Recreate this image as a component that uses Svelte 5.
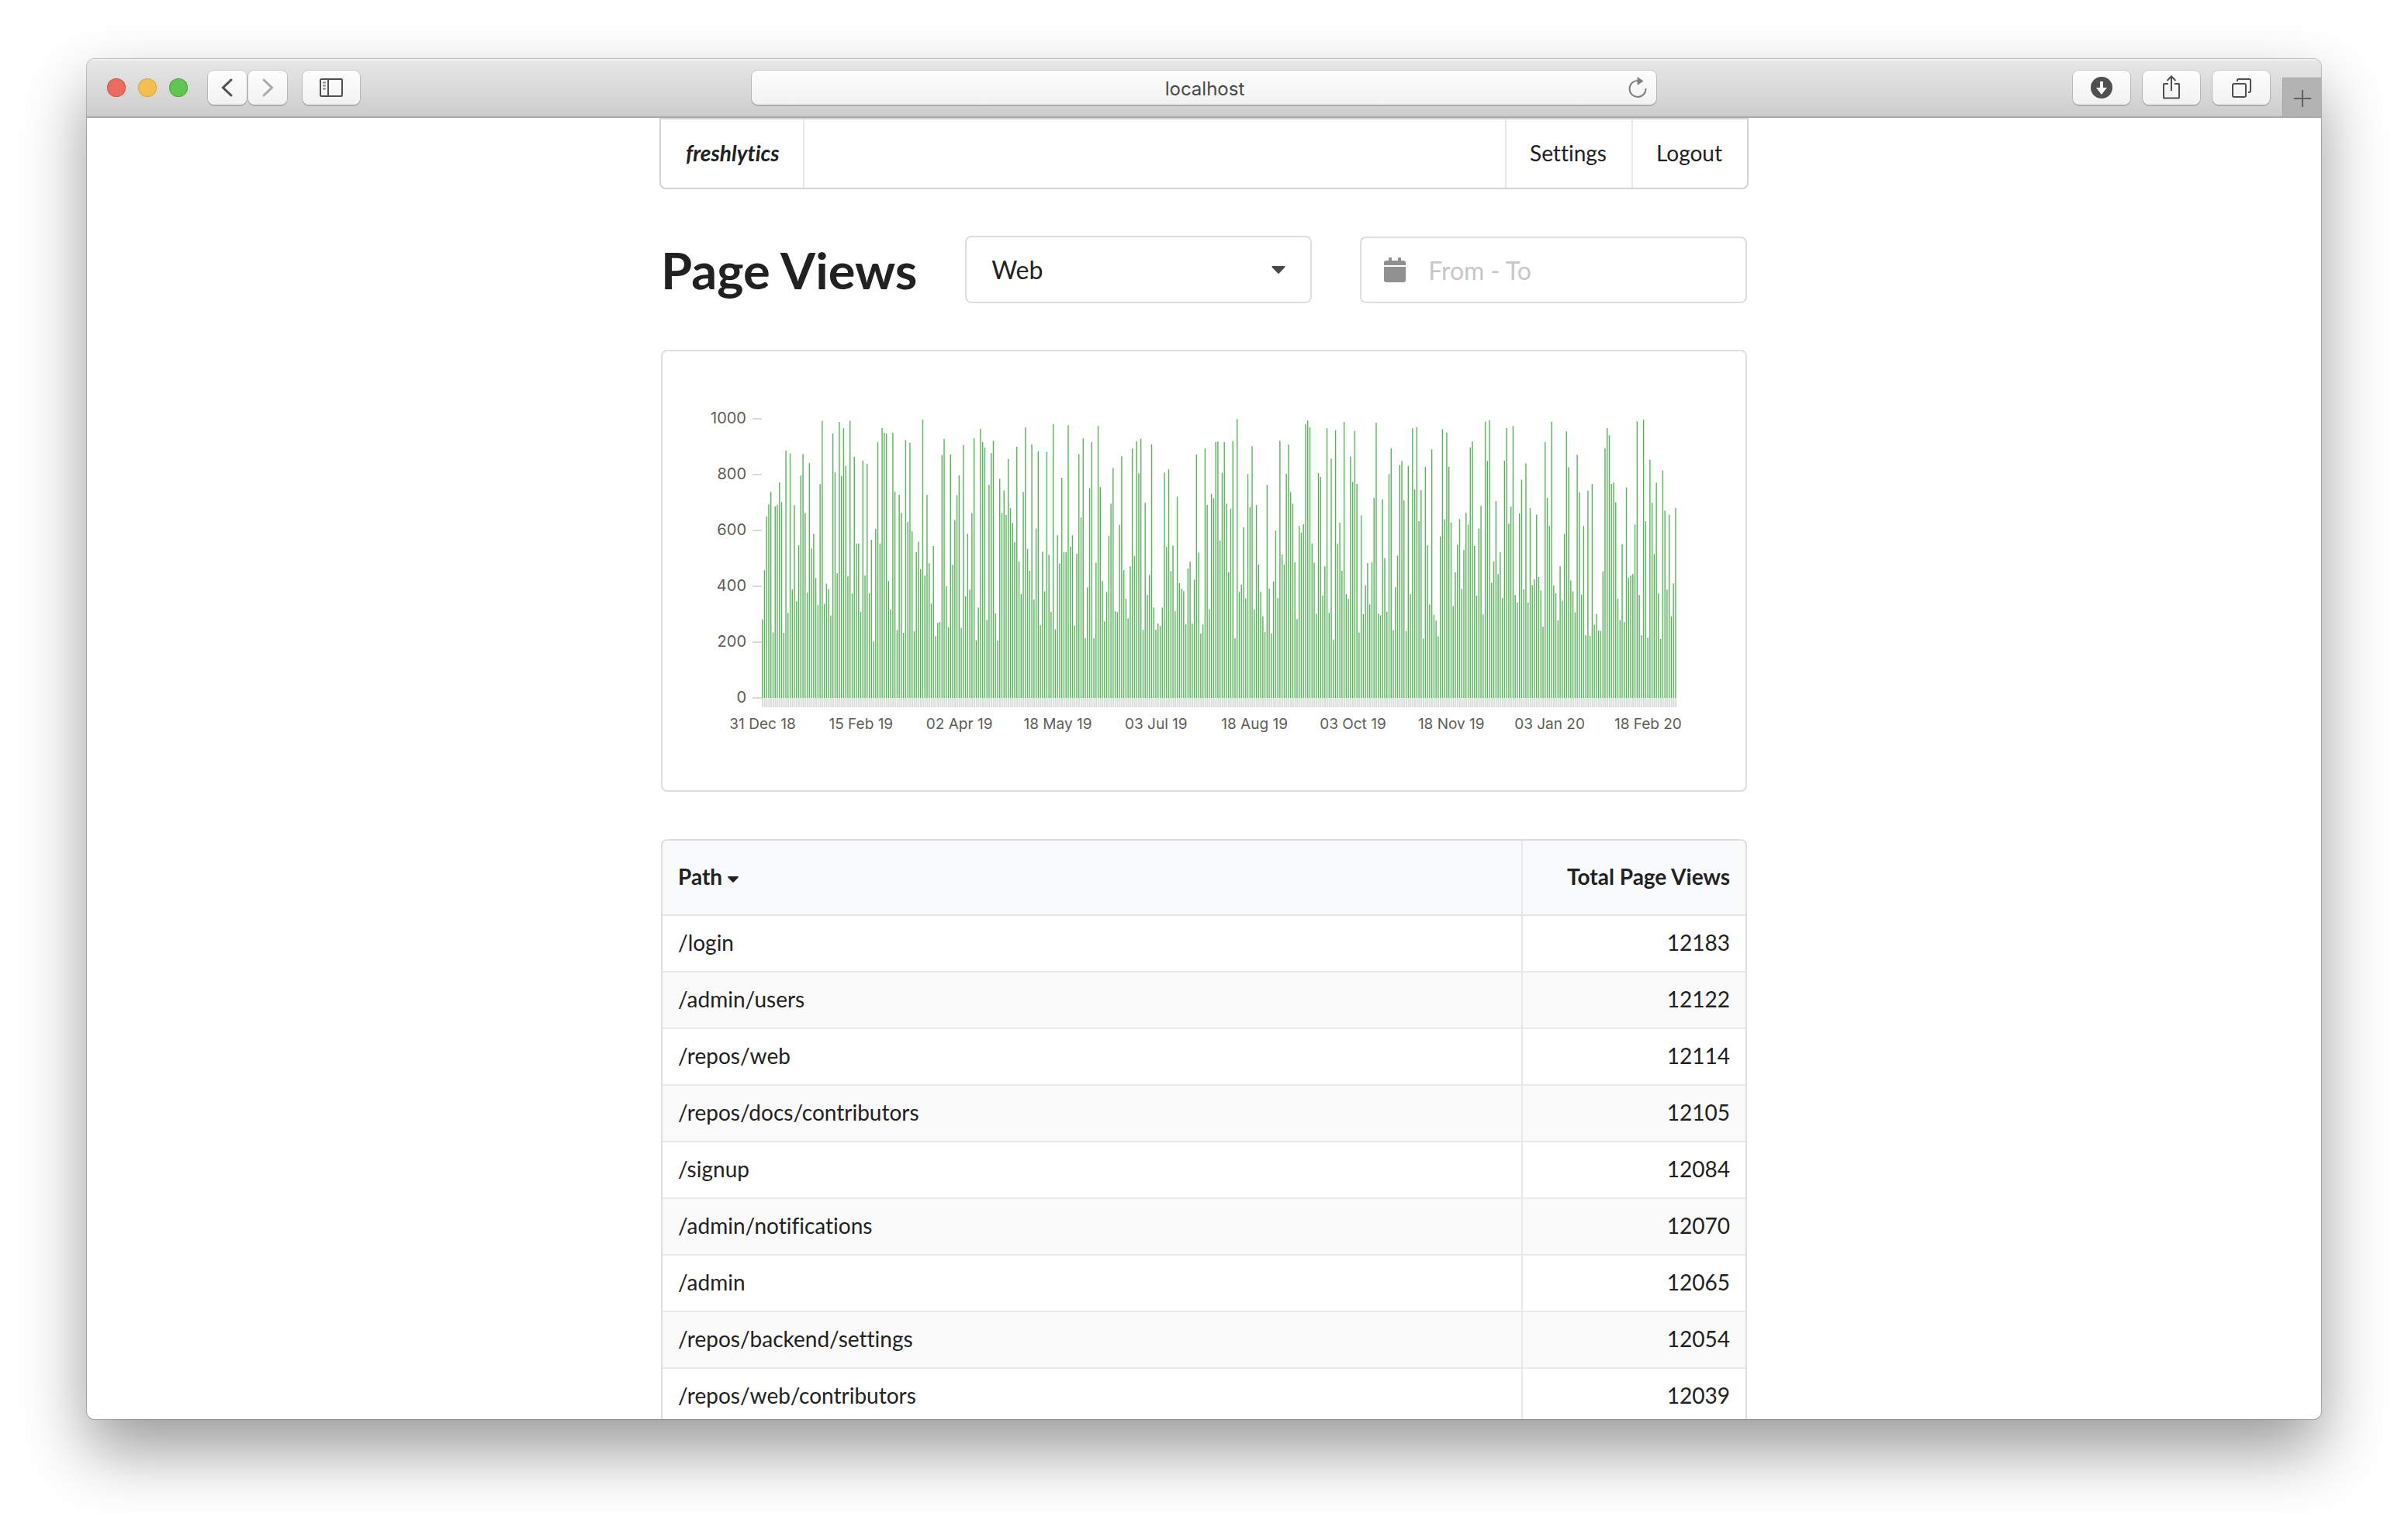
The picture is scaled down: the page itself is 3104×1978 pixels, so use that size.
<script lang="ts">
  const views: number[] = [
    281, 458, 650, 694, 738, 235, 686, 692, 772, 702, 233, 886, 305, 876, 388, 691, 347, 547, 797, 874,
    663, 377, 842, 536, 588, 430, 333, 766, 993, 337, 409, 390, 295, 948, 809, 447, 989, 795, 966, 831,
    436, 993, 374, 864, 553, 553, 308, 850, 439, 839, 375, 567, 202, 606, 916, 553, 967, 950, 947, 419,
    317, 950, 739, 243, 728, 663, 233, 924, 630, 914, 598, 239, 522, 560, 461, 997, 439, 727, 483, 338,
    545, 221, 269, 272, 870, 928, 401, 253, 872, 477, 637, 726, 797, 251, 906, 364, 588, 388, 663, 931,
    207, 324, 964, 917, 897, 280, 763, 877, 921, 303, 206, 785, 663, 743, 656, 856, 680, 627, 558, 900,
    489, 372, 738, 969, 534, 456, 908, 353, 607, 883, 261, 524, 382, 881, 513, 308, 981, 246, 583, 482,
    789, 522, 522, 977, 542, 583, 260, 517, 873, 647, 930, 214, 396, 752, 917, 214, 485, 974, 756, 419,
    274, 380, 581, 696, 824, 311, 307, 620, 866, 458, 356, 285, 472, 894, 509, 919, 805, 928, 244, 699,
    369, 441, 908, 324, 244, 267, 258, 324, 808, 541, 819, 453, 546, 311, 721, 411, 391, 383, 264, 464,
    488, 267, 424, 872, 521, 231, 264, 894, 692, 318, 731, 716, 917, 919, 564, 807, 917, 696, 450, 678,
    921, 214, 999, 380, 406, 611, 357, 802, 683, 902, 317, 691, 478, 380, 293, 236, 763, 392, 231, 417,
    599, 358, 921, 514, 478, 803, 908, 738, 696, 486, 283, 616, 592, 622, 981, 994, 969, 553, 485, 302,
    806, 792, 367, 472, 966, 305, 857, 208, 959, 552, 628, 456, 989, 372, 355, 865, 774, 957, 767, 235,
    654, 300, 404, 483, 335, 487, 717, 986, 302, 296, 711, 501, 309, 802, 895, 243, 397, 510, 834, 849,
    708, 240, 831, 372, 966, 747, 970, 633, 745, 213, 828, 547, 335, 891, 298, 277, 221, 579, 963, 640,
    951, 828, 628, 329, 450, 549, 641, 391, 530, 664, 621, 897, 919, 545, 367, 607, 689, 299, 990, 849,
    995, 413, 489, 705, 444, 522, 358, 850, 967, 624, 685, 974, 369, 342, 661, 782, 389, 840, 342, 680,
    405, 425, 657, 434, 385, 255, 917, 717, 616, 990, 403, 375, 278, 472, 349, 588, 955, 827, 421, 382,
    307, 871, 737, 370, 616, 225, 742, 222, 766, 263, 301, 242, 240, 453, 894, 967, 941, 767, 772, 701,
    355, 279, 551, 272, 754, 431, 439, 444, 621, 991, 369, 225, 997, 633, 216, 853, 699, 516, 771, 375,
    211, 815, 671, 388, 657, 293, 410, 681
  ];

  const plot = { left: 128, width: 1180, top: 87, bottom: 447 };
  const step = plot.width / views.length;
  const barWidth = step / 2;
  const yOf = (v: number) => plot.bottom - (v / 1000) * (plot.bottom - plot.top);
  const yTicks = [1000, 800, 600, 400, 200, 0];
  const xLabels = [
    '31 Dec 18', '15 Feb 19', '02 Apr 19', '18 May 19', '03 Jul 19',
    '18 Aug 19', '03 Oct 19', '18 Nov 19', '03 Jan 20', '18 Feb 20'
  ];
  const daysPerLabel = 46;

  const rows = [
    { path: '/login', total: 12183 },
    { path: '/admin/users', total: 12122 },
    { path: '/repos/web', total: 12114 },
    { path: '/repos/docs/contributors', total: 12105 },
    { path: '/signup', total: 12084 },
    { path: '/admin/notifications', total: 12070 },
    { path: '/admin', total: 12065 },
    { path: '/repos/backend/settings', total: 12054 },
    { path: '/repos/web/contributors', total: 12039 }
  ];
</script>

<div class="desktop">
  <div class="window">
    <header class="toolbar">
      <div class="side">
        <div class="lights">
          <button class="light red" aria-label="Close"></button>
          <button class="light yellow" aria-label="Minimize"></button>
          <button class="light green" aria-label="Zoom"></button>
        </div>
        <div class="nav">
          <button class="tool narrow" aria-label="Back">
            <svg width="50" height="44" viewBox="0 0 50 44"><path d="M30 12 19.500 22 30 32" fill="none" stroke="#4f4f4f" stroke-width="3" stroke-linecap="round" stroke-linejoin="miter" /></svg>
          </button>
          <button class="tool narrow" aria-label="Forward">
            <svg width="50" height="44" viewBox="0 0 50 44"><path d="M20 12 30.500 22 20 32" fill="none" stroke="#a9a9a9" stroke-width="3" stroke-linecap="round" /></svg>
          </button>
        </div>
        <button class="tool" aria-label="Show sidebar">
          <svg width="74" height="44" viewBox="0 0 74 44">
            <g fill="none" stroke="#4f4f4f" stroke-width="2">
              <rect x="23" y="11" width="28" height="22" rx="1.500" />
              <path d="M33 11v22" />
            </g>
            <path d="M26 15.500h4M26 19.500h4M26 23.500h4" stroke="#8a8a8a" stroke-width="2" />
          </svg>
        </button>
      </div>

      <div class="address">
        <input type="text" aria-label="Address" value="localhost" />
        <button class="reload" aria-label="Reload">
          <svg width="28" height="28" viewBox="0 0 28 28">
            <path d="M15 5A10.500 10.500 0 1 0 24.500 15" fill="none" stroke="#808080" stroke-width="2" />
            <path d="M13.500 0v11l8-5.500z" fill="#808080" />
          </svg>
        </button>
      </div>

      <div class="side end">
        <button class="tool" aria-label="Downloads">
          <svg width="74" height="44" viewBox="0 0 74 44">
            <circle cx="37" cy="22" r="14" fill="#4f4f4f" />
            <path d="M35 14h4v8h5l-7 9-7-9h5z" fill="#fafafa" />
          </svg>
        </button>
        <button class="tool" aria-label="Share">
          <svg width="74" height="44" viewBox="0 0 74 44">
            <path d="M33 17h-5.500a.5.500 0 0 0-.5.500V35a.5.500 0 0 0 .5.500h19a.5.500 0 0 0 .5-.5V17.500a.5.500 0 0 0-.5-.5H41M37 26V8M31.500 13 37 7.500 42.500 13" fill="none" stroke="#4f4f4f" stroke-width="2" />
          </svg>
        </button>
        <button class="tool" aria-label="Show all tabs">
          <svg width="74" height="44" viewBox="0 0 74 44">
            <g fill="none" stroke="#4f4f4f" stroke-width="2">
              <rect x="26" y="17" width="17" height="17" rx="2" />
              <path d="M32 14v-1.500a1.500 1.500 0 0 1 1.500-1.500h14A1.500 1.500 0 0 1 49 12.500v13.500a2 2 0 0 1-2 2h-1" />
            </g>
          </svg>
        </button>
        <button class="new-tab" aria-label="New tab">
          <svg width="22" height="22" viewBox="0 0 22 22"><path d="M11 0v22M0 11h22" stroke="#606060" stroke-width="2" /></svg>
        </button>
      </div>
    </header>

    <main class="page">
      <nav class="menu">
        <a class="item brand" href="#home">freshlytics</a>
        <a class="item first-right" href="#settings">Settings</a>
        <a class="item" href="#logout">Logout</a>
      </nav>

      <div class="filters">
        <h1>Page Views</h1>
        <div class="dropdown">
          <select aria-label="Project">
            <option>Web</option>
          </select>
          <svg class="caret" width="18" height="10" viewBox="0 0 18 10"><path d="M1.500 0h15a1 1 0 0 1 .7 1.700L10 9.200a1.400 1.400 0 0 1-2 0L.8 1.700A1 1 0 0 1 1.500 0z" fill="#484848" /></svg>
        </div>
        <div class="range">
          <svg class="calendar" width="30" height="32" viewBox="0 0 30 32">
            <path d="M1 10V7a3 3 0 0 1 3-3h3V1a1 1 0 0 1 1-1h2a1 1 0 0 1 1 1v3h8V1a1 1 0 0 1 1-1h2a1 1 0 0 1 1 1v3h3a3 3 0 0 1 3 3v3zM1 12h28v17a3 3 0 0 1-3 3H4a3 3 0 0 1-3-3z" fill="#909090" />
          </svg>
          <input type="text" aria-label="Date range" placeholder="From - To" />
        </div>
      </div>

      <section class="card">
        <svg class="chart" viewBox="0 0 1396 566" role="img" aria-label="Page views per day">
          {#each yTicks as tick}
            <line class="tick" x1={plot.left - 12} x2={plot.left} y1={yOf(tick)} y2={yOf(tick)} />
            <text class="label y" x={plot.left - 20} y={yOf(tick) + 6}>{tick}</text>
          {/each}
          {#each views as v, i}
            <rect class="day" x={plot.left + i * step} y={plot.bottom} width="2" height="12" />
            <rect class="bar" x={plot.left + i * step} y={yOf(v)} width={barWidth} height={plot.bottom - yOf(v)} />
          {/each}
          {#each xLabels as label, i}
            <text class="label x" x={plot.left + 1 + i * daysPerLabel * step} y={plot.bottom + 40}>{label}</text>
          {/each}
        </svg>
      </section>

      <div class="table-frame">
        <table>
          <thead>
            <tr>
              <th class="path" scope="col">
                Path<svg class="sort" width="14" height="8" viewBox="0 0 14 8"><path d="M1 0h12a.8.800 0 0 1 .6 1.400L8 7.300a1.400 1.400 0 0 1-2 0L.4 1.400A.8.800 0 0 1 1 0z" fill="#212121" /></svg>
              </th>
              <th class="total" scope="col">Total Page Views</th>
            </tr>
          </thead>
          <tbody>
            {#each rows as row}
              <tr>
                <td class="path">{row.path}</td>
                <td class="total">{row.total}</td>
              </tr>
            {/each}
          </tbody>
        </table>
      </div>
    </main>
  </div>
</div>

<style>
  :global(body) {
    margin: 0;
    background: #fff;
    color: #212121;
    font-family: Lato, 'Liberation Sans', sans-serif;
    font-size: 28px;
    font-variant-ligatures: no-common-ligatures;
  }

  .desktop {
    box-sizing: border-box;
    height: 100vh;
    padding: 76px 112px 148px;
    overflow: hidden;
  }

  .window {
    display: flex;
    flex-direction: column;
    height: 100%;
    border-radius: 10px;
    background: #fff;
    box-shadow: 0 0 0 1px rgba(0, 0, 0, 0.22), 0 40px 84px rgba(0, 0, 0, 0.4);
    overflow: hidden;
  }

  button,
  input,
  select {
    margin: 0;
    padding: 0;
    border: 0;
    background: none;
    color: inherit;
    font: inherit;
  }

  svg {
    display: block;
  }

  .toolbar {
    box-sizing: border-box;
    display: grid;
    grid-template-columns: 1fr minmax(0, 1166px) 1fr;
    flex: none;
    height: 76px;
    border-bottom: 2px solid #aaa;
    background: linear-gradient(#e7e7e7, #cdcdcd);
    box-shadow: inset 0 2px #f2f2f2;
    align-items: center;
  }

  .side {
    display: flex;
    align-items: center;
    gap: 26px;
    padding-left: 26px;
  }

  .side.end {
    justify-content: flex-end;
    gap: 16px;
    align-self: stretch;
  }

  .side > .tool:last-child {
    margin-left: -6px;
  }

  .lights {
    display: flex;
    gap: 16px;
  }

  .light {
    width: 24px;
    height: 24px;
    border-radius: 50%;
  }

  .red {
    background: #ed6a5e;
    box-shadow: inset 0 0 0 1px #d8584c;
  }

  .yellow {
    background: #f5bf4f;
    box-shadow: inset 0 0 0 1px #dca53d;
  }

  .green {
    background: #61c554;
    box-shadow: inset 0 0 0 1px #51a93f;
  }

  .nav {
    display: flex;
    gap: 2px;
  }

  .tool,
  .address {
    border-radius: 8px;
    background: linear-gradient(#fdfdfd, #f2f2f2);
    box-shadow: 0 0 0 1px rgba(0, 0, 0, 0.13), 0 1px 1px rgba(0, 0, 0, 0.3);
  }

  .tool {
    width: 74px;
    height: 44px;
  }

  .tool.narrow {
    width: 50px;
  }

  .new-tab {
    box-sizing: border-box;
    display: flex;
    align-items: center;
    justify-content: center;
    align-self: flex-end;
    width: 50px;
    height: 50px;
    padding-top: 2px;
    border-top: 1px solid #a2a2a2;
    border-left: 1px solid #a2a2a2;
    background: #b3b3b3;
  }

  .address {
    display: flex;
    align-items: center;
    height: 44px;
    padding: 0 10px 0 40px;
  }

  .address input {
    flex: 1;
    min-width: 0;
    padding-top: 2px;
    color: #484848;
    font-family: Inter, 'Liberation Sans', sans-serif;
    font-size: 24px;
    text-align: center;
  }

  .page {
    box-sizing: border-box;
    width: 100%;
    max-width: 1400px;
    margin: 0 auto;
  }

  .menu {
    display: flex;
    margin: 0 -2px;
    border: 2px solid #d4d4d5;
    border-radius: 0 0 8px 8px;
  }

  .item {
    padding: 27px 32px 29px 30px;
    border-left: 2px solid #e8e8e8;
    color: #212121;
    line-height: 32px;
    text-decoration: none;
  }

  .brand {
    padding: 27px 30px 29px 32px;
    border-right: 2px solid #e8e8e8;
    border-left: 0;
    font-style: italic;
    font-weight: 700;
  }

  .first-right {
    margin-left: auto;
  }

  .filters {
    display: grid;
    grid-template-columns: 328fr 448fr 500fr;
    align-items: end;
    gap: 62px;
    margin: 60px 0;
  }

  h1 {
    margin: 0;
    align-self: center;
    font-size: 65px;
    line-height: 80px;
    white-space: nowrap;
  }

  .dropdown,
  .range {
    box-sizing: border-box;
    display: flex;
    align-items: center;
    min-width: 0;
    border: 2px solid #dededf;
    border-radius: 8px;
    font-size: 32px;
  }

  .dropdown {
    position: relative;
    height: 87px;
  }

  select {
    width: 100%;
    height: 100%;
    padding: 0 32px;
    appearance: none;
    outline: none;
  }

  .caret {
    position: absolute;
    right: 32px;
    pointer-events: none;
  }

  .range {
    height: 86px;
    gap: 28px;
    padding: 0 28px;
  }

  .range input {
    flex: 1;
    min-width: 0;
    outline: none;
  }

  .range input::placeholder {
    color: #c7c7c7;
    opacity: 1;
  }

  .card {
    border: 2px solid #dededf;
    border-radius: 8px;
  }

  .chart {
    width: 100%;
    height: auto;
  }

  .tick {
    stroke: #d9d9d9;
    stroke-width: 2;
  }

  .day {
    fill: #ddd;
  }

  .bar {
    fill: #54b356;
  }

  .label {
    fill: #5c5e56;
    font-family: Inter, 'Liberation Sans', sans-serif;
    font-size: 20px;
  }

  .label.y {
    text-anchor: end;
  }

  .label.x {
    font-size: 19px;
    text-anchor: middle;
  }

  .table-frame {
    margin-top: 61px;
    border: 2px solid #dededf;
    border-radius: 8px;
    overflow: hidden;
  }

  table {
    width: 100%;
    border-collapse: separate;
    border-spacing: 0;
    line-height: 35px;
  }

  th {
    padding: 29px 20px 31px;
    border-bottom: 2px solid #e4e5e6;
    background: #f9fafb;
    font-weight: 700;
  }

  td {
    padding: 17px 20px 19px;
    border-bottom: 2px solid #e9e9e9;
  }

  tbody tr:nth-child(even) {
    background: #fafafa;
  }

  .path {
    text-align: left;
  }

  .total {
    width: 247px;
    border-left: 2px solid #e7e8e8;
    text-align: right;
  }

  .sort {
    display: inline-block;
    margin-left: 7px;
    vertical-align: 3px;
  }
</style>
